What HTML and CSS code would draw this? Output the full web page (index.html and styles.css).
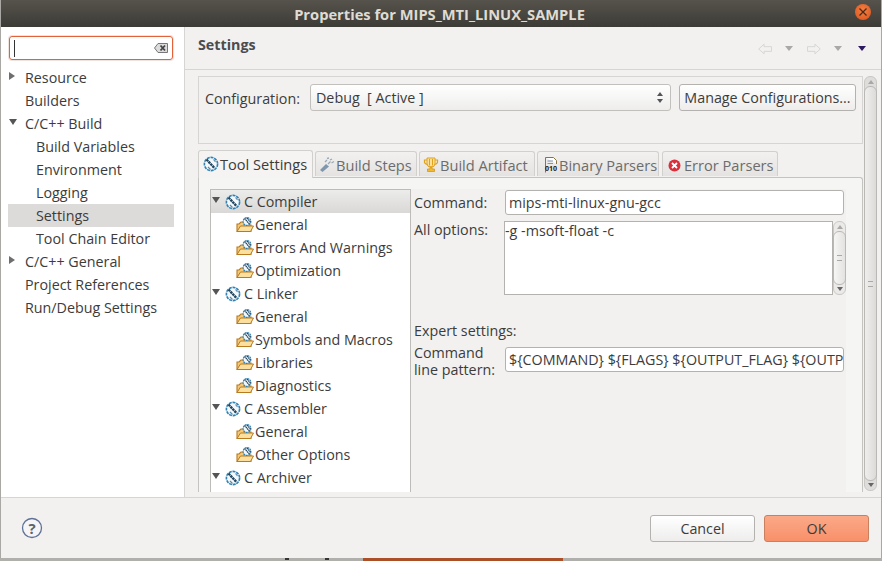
FILE: index.html

```html
<!DOCTYPE html>
<html lang="en">
<head>
  <meta charset="UTF-8">
  <title>Properties for MIPS_MTI_LINUX_SAMPLE</title>
  <link rel="stylesheet" href="styles.css">
</head>
<body>
  <svg class="defs" width="0" height="0">
    <symbol id="tool" viewBox="0 0 16 16">
      <circle cx="8" cy="8" r="6.600" fill="#f4f8fb" stroke="#2f82b6" stroke-width="1.600" stroke-dasharray="3 .8"/>
      <path d="M3.500 3.500 L11.500 12" stroke="#22465f" stroke-width="2.400" stroke-dasharray="2.400 .5"/>
      <path d="M5 11 L7.500 13.500 M10.500 3.500 L12.500 6" stroke="#5d8aa6" stroke-width="1.200"/>
    </symbol>
    <symbol id="folder" viewBox="0 0 18 16">
      <path d="M1 14.500 V7 H3 L5 5 H8 V8 H15 V14.500 Z" fill="#f3c879" stroke="#b97a1e" stroke-width="1.100"/>
      <path d="M1 14.500 L4.500 9 H17.500 L14.500 14.500 Z" fill="#fbdf9f" stroke="#b97a1e" stroke-width="1"/>
      <circle cx="11" cy="4.500" r="3.900" fill="#f4f8fb" stroke="#2f82b6" stroke-width="1.100" stroke-dasharray="2 .6"/>
      <path d="M8.500 1.500 L13.500 7 M11 1 L14.500 5" fill="none" stroke="#22465f" stroke-width="1.300" stroke-dasharray="1.500 .5"/>
    </symbol>
  </svg>

  <div class="window">
    <div class="titlebar">
      <span class="title">Properties for MIPS_MTI_LINUX_SAMPLE</span>
      <span class="close">
        <svg width="10" height="10" viewBox="0 0 10 10"><path d="M1.500 1.500 L8.500 8.500 M8.500 1.500 L1.500 8.500" stroke="#4a2a18" stroke-width="1.300"/></svg>
      </span>
    </div>

    <div class="main">
      <div class="nav">
        <div class="search">
          <span class="caret"></span>
          <svg class="clear" width="14" height="10" viewBox="0 0 14 10"><path d="M4 .5 H13.500 V9.500 H4 L.5 5 Z" fill="#dcdcdc" stroke="#777"/><path d="M6.500 2.500 L11 7.500 M11 2.500 L6.500 7.500" stroke="#444" stroke-width="1.800"/></svg>
        </div>
        <ul class="nav-list">
          <li><span class="arrow right"></span>Resource</li>
          <li>Builders</li>
          <li><span class="arrow down"></span>C/C++ Build</li>
          <li class="sub">Build Variables</li>
          <li class="sub">Environment</li>
          <li class="sub">Logging</li>
          <li class="sub selected">Settings</li>
          <li class="sub">Tool Chain Editor</li>
          <li><span class="arrow right"></span>C/C++ General</li>
          <li>Project References</li>
          <li>Run/Debug Settings</li>
        </ul>
      </div>

      <div class="content">
        <div class="page-head">
          <h1>Settings</h1>
          <div class="history">
            <svg width="14" height="12" viewBox="0 0 15 12"><path d="M.8 6 L6.500 .8 V3.500 H14.500 V8.500 H6.500 V11.200 Z" fill="none" stroke="#d4d4d2"/></svg>
            <span class="tri grey"></span>
            <svg width="14" height="12" viewBox="0 0 15 12"><path d="M14.200 6 L8.500 .8 V3.500 H.5 V8.500 H8.500 V11.200 Z" fill="none" stroke="#d4d4d2"/></svg>
            <span class="tri grey"></span>
            <span class="tri dark"></span>
          </div>
        </div>

        <div class="page-body">
          <div class="page-inner">
            <div class="config">
              <span>Configuration:</span>
              <div class="select">Debug  [ Active ]
                <span class="updown"><i class="up"></i><i class="dn"></i></span>
              </div>
              <button class="btn manage">Manage Configurations...</button>
            </div>

            <div class="tabs">
              <div class="tab active"><svg width="16" height="16"><use href="#tool"/></svg>Tool Settings</div>
              <div class="tab">
                <svg width="16" height="16" viewBox="0 0 16 16"><path d="M1 13 L7 7 L10 9.500 L3.500 15 Z" fill="#7f97ad"/><path d="M6 5 L8 3 M9 7 L11.500 4.500 M8 1.500 L10 1 M11 3 L13 2 M12.500 6 L15 4.500" stroke="#9aa9b5" stroke-width="1.300"/></svg>Build Steps
              </div>
              <div class="tab">
                <svg width="16" height="16" viewBox="0 0 16 16"><path d="M4 1 H12 V7 Q12 10 8 10 Q4 10 4 7 Z" fill="#fbe09a" stroke="#e0a11c"/><path d="M6.500 2 V8.500 M9.500 2 V8.500" stroke="#e0a11c"/><path d="M4 3 H1.500 V5.500 Q2 7 4.500 7.500 M12 3 H14.500 V5.500 Q14 7 11.500 7.500" fill="none" stroke="#e0a11c" stroke-width="1.200"/><path d="M7 10 H9 V12 H11.500 V14.500 H4.500 V12 H7 Z" fill="#f2bb2e" stroke="#d9960f" stroke-width=".8"/></svg>Build Artifact
              </div>
              <div class="tab">
                <svg width="14" height="16" viewBox="0 0 14 16"><path d="M1.500 .5 H9.500 L12.500 3.500 V7 M1.500 .5 V15.500" fill="#fff" stroke="#8a7440"/><path d="M3.500 4 H9 M3.500 6.500 H9" stroke="#7d93b0"/><text class="bits" x="1" y="14">010</text></svg>Binary Parsers
              </div>
              <div class="tab">
                <svg width="13" height="13" viewBox="0 0 13 13"><circle cx="6.500" cy="6.500" r="6" fill="#d9303c"/><path d="M4 4 L9 9 M9 4 L4 9" stroke="#fff" stroke-width="1.800"/></svg>Error Parsers
              </div>
            </div>

            <div class="tab-panel">
              <ul class="tree">
                <li class="group first"><span class="arrow down"></span><svg width="16" height="16"><use href="#tool"/></svg>C Compiler</li>
                <li class="leaf"><svg width="18" height="16"><use href="#folder"/></svg>General</li>
                <li class="leaf"><svg width="18" height="16"><use href="#folder"/></svg>Errors And Warnings</li>
                <li class="leaf"><svg width="18" height="16"><use href="#folder"/></svg>Optimization</li>
                <li class="group"><span class="arrow down"></span><svg width="16" height="16"><use href="#tool"/></svg>C Linker</li>
                <li class="leaf"><svg width="18" height="16"><use href="#folder"/></svg>General</li>
                <li class="leaf"><svg width="18" height="16"><use href="#folder"/></svg>Symbols and Macros</li>
                <li class="leaf"><svg width="18" height="16"><use href="#folder"/></svg>Libraries</li>
                <li class="leaf"><svg width="18" height="16"><use href="#folder"/></svg>Diagnostics</li>
                <li class="group"><span class="arrow down"></span><svg width="16" height="16"><use href="#tool"/></svg>C Assembler</li>
                <li class="leaf"><svg width="18" height="16"><use href="#folder"/></svg>General</li>
                <li class="leaf"><svg width="18" height="16"><use href="#folder"/></svg>Other Options</li>
                <li class="group"><span class="arrow down"></span><svg width="16" height="16"><use href="#tool"/></svg>C Archiver</li>
              </ul>

              <div class="form">
                <div class="row-command">
                  <label>Command:</label>
                  <div class="field">mips-mti-linux-gnu-gcc</div>
                </div>
                <div class="row-options">
                  <label>All options:</label>
                  <div class="textarea">-g -msoft-float -c</div>
                  <div class="mini-scroll">
                    <span class="mini-tri up"></span>
                    <div class="mini-thumb"><i></i></div>
                    <span class="mini-tri dn"></span>
                  </div>
                </div>
                <div class="expert">Expert settings:</div>
                <div class="row-pattern">
                  <label>Command<br>line pattern:</label>
                  <div class="field clip"><span class="nowrap">${COMMAND} ${FLAGS} ${OUTPUT_FLAG} ${OUTP</span></div>
                </div>
              </div>
            </div>
          </div>

          <div class="scroll">
            <span class="mini-tri up"></span>
            <div class="scroll-thumb"><i></i></div>
            <span class="mini-tri dn"></span>
          </div>
        </div>
      </div>
    </div>

    <div class="footer">
      <svg class="help" width="22" height="22" viewBox="0 0 22 22"><circle cx="11" cy="11" r="9.500" fill="#f5f5f7" stroke="#5f7196" stroke-width="1.300"/><text class="help-q" x="11" y="16.500">?</text></svg>
      <div class="actions">
        <button class="btn cancel">Cancel</button>
        <button class="btn ok">OK</button>
      </div>
    </div>

    <div class="desktop">
      <span class="tick"></span>
      <span class="tick second"></span>
      <span class="desktop-orange"></span>
    </div>
  </div>
</body>
</html>
```

FILE: styles.css

```css
* {
  box-sizing: border-box;
}
html, body {
  margin: 0;
  padding: 0;
}
body {
  width: 882px;
  height: 561px;
  overflow: hidden;
  background: #a9a8a5;
  font-family: "Open Sans", "Noto Sans", sans-serif;
  font-size: 14.300px;
  color: #3c3c3c;
}
ul {
  list-style: none;
  margin: 0;
  padding: 0;
}
.defs {
  display: block;
  height: 0;
}
.window {
  display: flex;
  flex-direction: column;
  height: 561px;
  padding-left: 1px;
  padding-right: 1px;
}

/* title bar */
.titlebar {
  height: 27px;
  flex: none;
  display: flex;
  align-items: center;
  justify-content: center;
  position: relative;
  background: linear-gradient(#56534c, #3d3b36);
  color: #dfdbd2;
  font-weight: 700;
  font-size: 14.700px;
  padding-right: 3px;
}
.close {
  position: absolute;
  right: 10px;
  top: 4px;
  width: 16px;
  height: 16px;
  border-radius: 50%;
  background: radial-gradient(circle at 50% 40%, #f5803f, #d9511f);
  display: flex;
  align-items: center;
  justify-content: center;
}

.main {
  display: flex;
  height: 470px;
  flex: none;
}

/* left nav */
.nav {
  width: 184px;
  flex: none;
  background: #fff;
  border-right: 1px solid #d6d5d3;
  padding: 9px 11px 0 8px;
}
.search {
  height: 24px;
  border: 1px solid #e2623a;
  border-radius: 3px;
  box-shadow: 0 0 0 1px #f0e3de;
  display: flex;
  align-items: center;
  justify-content: space-between;
  padding: 0 4px;
}
.caret {
  width: 1px;
  height: 17px;
  background: #333;
}
.nav-list {
  margin-top: 6px;
  margin-left: -1px;
  margin-right: -1px;
}
.nav-list li {
  height: 23px;
  line-height: 23px;
  padding-left: 17px;
  position: relative;
  white-space: nowrap;
}
.nav-list li.sub {
  padding-left: 28px;
}
.nav-list li.selected {
  background: #dddbd9;
}
.arrow {
  position: absolute;
  width: 0;
  height: 0;
}
.arrow.right {
  left: 1px;
  top: 6px;
  border-left: 6px solid #6e6e6e;
  border-top: 4px solid transparent;
  border-bottom: 4px solid transparent;
}
.arrow.down {
  left: 1px;
  top: 7px;
  border-top: 6px solid #555;
  border-left: 4px solid transparent;
  border-right: 4px solid transparent;
}

/* right side */
.content {
  flex: 1;
  min-width: 0;
  background: #f2f1f0;
  display: flex;
  flex-direction: column;
}
.page-head {
  height: 43px;
  flex: none;
  border-bottom: 1px solid #d6d5d3;
  display: flex;
  align-items: center;
  justify-content: space-between;
  padding: 0 15px 0 13px;
}
.page-head h1 {
  margin: 0 0 7px;
  font-size: 14.300px;
  font-weight: 700;
  color: #4c4c4c;
}
.history {
  display: flex;
  align-items: center;
  padding-top: 1px;
}
.tri {
  width: 0;
  height: 0;
  margin: 0 14px 0 13px;
  border-top: 5px solid #a8a8a8;
  border-left: 4px solid transparent;
  border-right: 4px solid transparent;
}
.tri.dark {
  border-top-color: #2e1a5e;
  margin: 0 0 0 2px;
}
.page-body {
  flex: 1;
  min-height: 0;
  display: flex;
  padding: 6px 4px 0 13px;
}
.page-inner {
  width: 665px;
  flex: none;
}
.config {
  height: 68px;
  border: 1px solid #d6d5d3;
  display: flex;
  align-items: flex-start;
  padding: 7px 0 0 6px;
}
.config > span {
  margin-top: 5px;
  width: 105px;
  flex: none;
}
.select {
  width: 361px;
  flex: none;
  height: 27px;
  line-height: 25px;
  padding-left: 5px;
  border: 1px solid #c2c0bd;
  border-radius: 3px;
  background: linear-gradient(#fff, #eeedec);
  white-space: pre;
  position: relative;
}
.updown {
  position: absolute;
  right: 7px;
  top: 7px;
  display: flex;
  flex-direction: column;
  gap: 3px;
}
.updown i {
  width: 0;
  height: 0;
  border-left: 3px solid transparent;
  border-right: 3px solid transparent;
}
.updown .up {
  border-bottom: 4px solid #555;
}
.updown .dn {
  border-top: 4px solid #555;
}
.btn {
  font: inherit;
  color: inherit;
  border: 1px solid #b4b2ae;
  border-radius: 3px;
  background: linear-gradient(#fff, #eeedec);
  padding: 0;
}
.manage {
  width: 177px;
  flex: none;
  height: 27px;
  margin-left: 8px;
  white-space: nowrap;
}

/* tabs */
.tabs {
  display: flex;
  align-items: flex-end;
  height: 27px;
  margin-top: 6px;
  position: relative;
  gap: 2px;
  font-size: 14.600px;
}
.tab {
  height: 25px;
  padding: 2px 0 0 3px;
  display: flex;
  align-items: center;
  white-space: nowrap;
  border: 1px solid #d2d0cd;
  border-bottom: none;
  border-radius: 3px 3px 0 0;
  background: linear-gradient(#f2f1f0, #e4e3e1);
  color: #6c6c6c;
  margin-bottom: 1px;
}
.tab:nth-child(1) { width: 115px; }
.tab:nth-child(2) { width: 102px; }
.tab:nth-child(3) { width: 116px; }
.tab:nth-child(4) { width: 122px; padding-left: 6px; }
.tab:nth-child(5) { width: 116px; margin-left: 1px; }
.tab svg {
  flex: none;
  margin-right: 1px;
}
.tab:last-child svg {
  margin: 0 3px 0 2px;
}
.tab.active {
  height: 28px;
  margin-bottom: -1px;
  background: #f5f4f3;
  color: #3c3c3c;
  position: relative;
  z-index: 1;
  padding: 0 0 1px 4px;
}
.tab-panel {
  height: 315px;
  border: 1px solid #c4c3c0;
  border-bottom: none;
  border-radius: 0 3px 0 0;
  display: flex;
  padding: 11px 16px 0 11px;
  background: #f5f5f4;
  overflow: hidden;
}

/* tree */
.tree {
  width: 201px;
  flex: none;
  height: 303px;
  overflow: hidden;
  background: #fff;
  border: 1px solid #bdbcb9;
  border-bottom: none;
}
.tree li {
  height: 23px;
  display: flex;
  align-items: center;
  position: relative;
  white-space: nowrap;
}
.tree .group {
  padding-left: 14px;
}
.tree .group svg {
  margin-right: 3px;
}
.tree .first {
  background: linear-gradient(#ececeb, #d9d8d6);
}
.tree .leaf {
  padding-left: 25px;
}
.tree .leaf svg {
  margin-right: 1px;
}
.tree .arrow.down {
  top: 7px;
}

/* form */
.form {
  flex: 1;
  min-width: 0;
  height: 303px;
  padding-left: 3px;
  background: #f2f1f0;
}
.form label {
  flex: none;
  width: 91px;
  line-height: 17px;
}
.row-command {
  display: flex;
  align-items: center;
  height: 25px;
  margin-top: 1px;
  padding-right: 2px;
}
.field {
  flex: 1;
  min-width: 0;
  height: 25px;
  line-height: 23px;
  padding-left: 3px;
  background: #fff;
  border: 1px solid #b4b2ae;
  border-radius: 3px;
  white-space: nowrap;
}
.clip {
  overflow: hidden;
}
.row-options {
  display: flex;
  margin-top: 6px;
  height: 74px;
}
.row-options label {
  width: 90px;
}
.textarea {
  flex: 1;
  min-width: 0;
  background: #fff;
  border: 1px solid #b4b2ae;
  line-height: 17px;
}
.mini-scroll {
  width: 13px;
  flex: none;
  background: #ebeae9;
  border: 1px solid #c9c8c5;
  border-radius: 6px;
  display: flex;
  flex-direction: column;
  align-items: center;
  justify-content: space-between;
  padding: 3px 0;
}
.mini-thumb, .scroll-thumb {
  width: 13px;
  flex: 1;
  margin: 2px -1px;
  border: 1px solid #b9b8b5;
  border-radius: 6px;
  background: linear-gradient(90deg, #f6f6f5, #e3e2e0);
  display: flex;
  align-items: center;
  justify-content: center;
}
.mini-thumb i, .scroll-thumb i {
  width: 5px;
  height: 6px;
  border-top: 1px solid #a9a8a5;
  border-bottom: 1px solid #a9a8a5;
}
.mini-tri {
  width: 0;
  height: 0;
  flex: none;
  border-left: 3px solid transparent;
  border-right: 3px solid transparent;
}
.mini-tri.up {
  border-bottom: 4px solid #a9a8a5;
}
.mini-tri.dn {
  border-top: 4px solid #666;
}
.expert {
  margin-top: 26px;
  line-height: 20px;
}
.row-pattern {
  display: flex;
  align-items: center;
  height: 36px;
  margin-top: 1px;
  padding-right: 2px;
}
.row-pattern .field {
  margin-top: -2px;
}
.row-pattern label {
  margin-top: 2px;
}
.nowrap {
  white-space: nowrap;
}

/* outer scrollbar */
.scroll {
  width: 13px;
  flex: none;
  margin-left: 1px;
  height: 415px;
  border: 1px solid #c9c8c5;
  border-radius: 6px;
  background: #dedddb;
  display: flex;
  flex-direction: column;
  align-items: center;
  justify-content: space-between;
  padding: 3px 0;
}
.scroll-thumb {
  background: linear-gradient(90deg, #efeeed, #dcdbd9);
}

/* footer */
.footer {
  height: 61px;
  flex: none;
  background: #f2f1f0;
  border-top: 1px solid #d6d5d3;
  display: flex;
  align-items: center;
  justify-content: space-between;
  padding: 0 12px 0 20px;
}
.help-q {
  font-size: 15px;
  font-weight: 700;
  fill: #5f6368;
  text-anchor: middle;
}
.bits {
  font-size: 7px;
  font-weight: 700;
  fill: #222;
}
.actions {
  display: flex;
  gap: 9px;
}
.cancel, .ok {
  width: 105px;
  height: 27px;
}
.ok {
  background: linear-gradient(#fba988, #f89069);
  border-color: #c9805f;
}
.desktop {
  height: 3px;
  flex: none;
  display: flex;
  background: #b0afac;
  margin: 0 -1px;
}
.tick {
  width: 4px;
  height: 2px;
  margin-left: 285px;
  background: #333;
}
.tick.second {
  margin-left: 36px;
}
.desktop-orange {
  display: block;
  width: 200px;
  height: 3px;
  margin-left: 34px;
  background: #aa4f28;
}
```
